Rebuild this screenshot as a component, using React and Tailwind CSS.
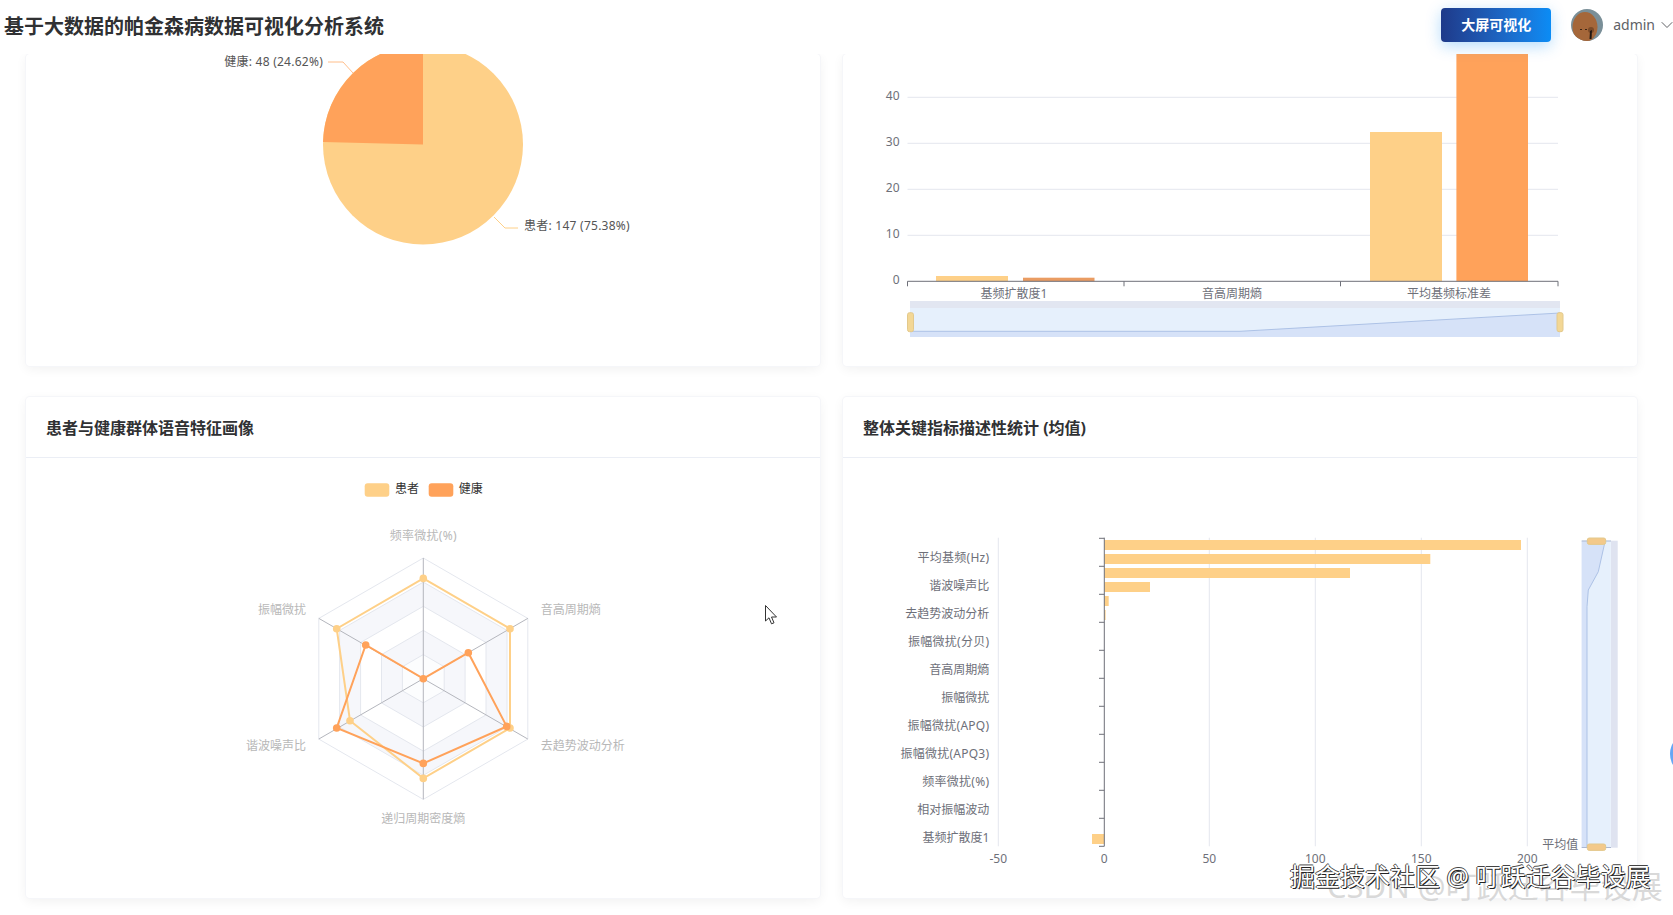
import { ChevronDown } from 'lucide-react'

const light = '#fed088'
const orange = '#ffa25a'
const axisText = '#6e7079'

// vertices of a hexagon around the radar center, top first and clockwise
const radarCx = 423.3
const radarCy = 678.7
function hexPoints(r) {
  return [0, 1, 2, 3, 4, 5]
    .map((i) => {
      const a = (Math.PI / 3) * i
      return `${(radarCx + r * Math.sin(a)).toFixed(1)},${(radarCy - r * Math.cos(a)).toFixed(1)}`
    })
    .join(' ')
}

const patientPts = [[423.3, 578.4], [510, 628.7], [510, 728], [423.3, 778.4], [350, 720.7], [336.7, 628.7]]
const healthyPts = [[423.3, 678.7], [468.3, 652.7], [506.7, 726.4], [423.3, 763.4], [336.7, 728], [365.7, 645]]

const barLabels = [
  ['平均基频(Hz)', 557.5, 0.25],
  ['谐波噪声比', 585.5, 0],
  ['去趋势波动分析', 613.5, 0],
  ['振幅微扰(分贝)', 641.5, 0.25],
  ['音高周期熵', 669.5, 0],
  ['振幅微扰', 697.5, 0],
  ['振幅微扰(APQ)', 725.5, 0.25],
  ['振幅微扰(APQ3)', 753.5, 0.25],
  ['频率微扰(%)', 781.5, 0.25],
  ['相对振幅波动', 809.5, 0],
  ['基频扩散度1', 837.5, 0],
]

const hBars = [
  [545, 1521],
  [559, 1430.3],
  [573, 1350],
  [587, 1150],
  [601, 1108.7],
  [615, 1105.6],
]

function PieChart() {
  return (
    <svg className="block w-full h-full" viewBox="26 54 794 312">
      <circle cx="423" cy="144.5" r="100" fill={light} />
      <path d="M423 144.5 L323 142 A100 100 0 0 1 423 44.5 Z" fill={orange} />
      <polyline points="328,62 343,62 353,73" fill="none" stroke={orange} strokeOpacity="0.7" />
      <polyline points="494,217 505,228 518,228" fill="none" stroke={light} />
      <text x="323" y="61.5" fontSize="12" letterSpacing="0.25" fill="#555" textAnchor="end" dominantBaseline="central">健康: 48 (24.62%)</text>
      <text x="524" y="225" fontSize="12" letterSpacing="0.25" fill="#555" dominantBaseline="central">患者: 147 (75.38%)</text>
    </svg>
  )
}

function GroupedBars() {
  return (
    <svg className="block w-full h-full" viewBox="843 54 794 312">
      {[[97.3, '40'], [143.3, '30'], [189.3, '20'], [235.3, '10']].map(([y, label]) => (
        <g key={label}>
          <line x1="907.5" x2="1558" y1={y} y2={y} stroke="#e4e7ee" />
          <text x="899.5" y={y - 1.5} fontSize="12" fill={axisText} textAnchor="end" dominantBaseline="central">{label}</text>
        </g>
      ))}
      <text x="899.5" y="279.8" fontSize="12" fill={axisText} textAnchor="end" dominantBaseline="central">0</text>

      <rect x="936" y="276" width="72" height="5.3" fill={light} />
      <rect x="1023" y="277.7" width="71.5" height="3.6" fill="#ea9c62" />
      <rect x="1370" y="132" width="72" height="149.3" fill={light} />
      <rect x="1456.4" y="40" width="71.6" height="241.3" fill={orange} />

      <line x1="907.5" x2="1558" y1="281.3" y2="281.3" stroke={axisText} />
      {[907.5, 1124, 1340.5, 1558].map((x) => (
        <line key={x} x1={x} x2={x} y1="281.3" y2="286.3" stroke={axisText} />
      ))}
      <text x="1014" y="293.5" fontSize="12" fill={axisText} textAnchor="middle" dominantBaseline="central">基频扩散度1</text>
      <text x="1232" y="293.5" fontSize="12" fill={axisText} textAnchor="middle" dominantBaseline="central">音高周期熵</text>
      <text x="1449" y="293.5" fontSize="12" fill={axisText} textAnchor="middle" dominantBaseline="central">平均基频标准差</text>

      {/* data zoom */}
      <rect x="910" y="301" width="650" height="7" fill="#dfe3f0" fillOpacity="0.9" />
      <rect x="910" y="308" width="650" height="29" fill="#e6f0fc" />
      <path d="M910 331.3 L1240 331.3 L1560 313 L1560 337 L910 337 Z" fill="#d6e2f8" />
      <path d="M910 331.3 L1240 331.3 L1560 313" fill="none" stroke="#adc2e6" />
      <rect x="907.5" y="312.7" width="6" height="19" rx="2" fill="#f3d795" stroke="#e3c98c" />
      <rect x="1557" y="312.7" width="6" height="19" rx="2" fill="#f3d795" stroke="#e3c98c" />
    </svg>
  )
}

function RadarChart() {
  return (
    <svg className="block w-full h-full" viewBox="26 458 794 440">
      <rect x="364.7" y="483.3" width="24.6" height="13.4" rx="3" fill={light} />
      <text x="395" y="488.7" fontSize="12" fill="#333" dominantBaseline="central">患者</text>
      <rect x="428.7" y="483.3" width="24.6" height="13.4" rx="3" fill={orange} />
      <text x="458.7" y="488.7" fontSize="12" fill="#333" dominantBaseline="central">健康</text>

      {/* rings, outermost first */}
      <polygon points={hexPoints(120.7)} fill="#ffffff" stroke="#e4e7ee" />
      <polygon points={hexPoints(96.6)} fill="#f6f7fb" stroke="#e4e7ee" />
      <polygon points={hexPoints(72.4)} fill="#ffffff" stroke="#e4e7ee" />
      <polygon points={hexPoints(48.3)} fill="#f6f7fb" stroke="#e4e7ee" />
      <polygon points={hexPoints(24.1)} fill="#fcfdfe" stroke="#e4e7ee" />
      {[0, 1, 2, 3, 4, 5].map((i) => {
        const a = (Math.PI / 3) * i
        return (
          <line
            key={i}
            x1={radarCx}
            y1={radarCy}
            x2={radarCx + 120.7 * Math.sin(a)}
            y2={radarCy - 120.7 * Math.cos(a)}
            stroke="#b4b6bd"
          />
        )
      })}

      <polygon points={patientPts.map((p) => p.join(',')).join(' ')} fill="none" stroke={light} strokeWidth="2" />
      {patientPts.map(([x, y]) => (
        <circle key={`${x}-${y}`} cx={x} cy={y} r="3.8" fill={light} />
      ))}
      <polygon points={healthyPts.map((p) => p.join(',')).join(' ')} fill="none" stroke={orange} strokeWidth="2" />
      {healthyPts.map(([x, y]) => (
        <circle key={`${x}-${y}`} cx={x} cy={y} r="3.8" fill={orange} />
      ))}

      <g fontSize="12" fill="#b8b8b8" dominantBaseline="central">
        <text x="423.3" y="535.7" letterSpacing="0.25" textAnchor="middle">频率微扰(%)</text>
        <text x="540.7" y="609.7">音高周期熵</text>
        <text x="540.7" y="745">去趋势波动分析</text>
        <text x="423.3" y="818" textAnchor="middle">递归周期密度熵</text>
        <text x="306" y="745" textAnchor="end">谐波噪声比</text>
        <text x="306" y="609.7" textAnchor="end">振幅微扰</text>
      </g>
    </svg>
  )
}

function HorizontalBars() {
  const ticks = []
  for (let i = 0; i < 12; i++) ticks.push(538.3 + i * 28)
  return (
    <svg className="block w-full h-full" viewBox="843 458 794 440">
      {[998.3, 1209.3, 1315.3, 1421.3, 1527.3].map((x) => (
        <line key={x} x1={x} x2={x} y1="537.7" y2="846.3" stroke="#e4e7ee" />
      ))}
      {hBars.map(([y, end]) => (
        <rect key={y} x="1104.3" y={y - 5} width={end - 1104.3} height="10" fill={light} />
      ))}
      <rect x="1092" y="834" width="12.3" height="10" fill={light} />

      <line x1="1104.3" x2="1104.3" y1="537.7" y2="846.3" stroke={axisText} />
      {ticks.map((y) => (
        <line key={y} x1="1099" x2="1104.3" y1={y} y2={y} stroke={axisText} />
      ))}
      {barLabels.map(([label, y, spacing]) => (
        <text key={label} x="989.3" y={y} fontSize="12" letterSpacing={spacing} fill={axisText} textAnchor="end" dominantBaseline="central">{label}</text>
      ))}
      {[[998.3, '-50'], [1104.3, '0'], [1209.3, '50'], [1315.3, '100'], [1421.3, '150'], [1527.3, '200']].map(([x, label]) => (
        <text key={label} x={x} y="858.7" fontSize="12" fill={axisText} textAnchor="middle" dominantBaseline="central">{label}</text>
      ))}

      {/* data zoom */}
      <text x="1578.3" y="844.5" fontSize="12" fill={axisText} textAnchor="end" dominantBaseline="central">平均值</text>
      <rect x="1610.7" y="540.7" width="7" height="307" fill="#dfe3f0" />
      <rect x="1581.7" y="540.7" width="29" height="307" fill="#e6f0fc" />
      <path d="M1605 541.7 L1598.3 571.7 L1588.3 590 L1587 606.7 L1587 847.7 L1581.7 847.7 L1581.7 540.7 L1605 540.7 Z" fill="#d6e2f8" />
      <path d="M1605 541.7 L1598.3 571.7 L1588.3 590 L1587 606.7 L1587 847.7" fill="none" stroke="#adc2e6" />
      <line x1="1581.7" x2="1611" y1="541" y2="541" stroke="#acb8d1" />
      <line x1="1581.7" x2="1611" y1="847.5" y2="847.5" stroke="#acb8d1" />
      <rect x="1587.3" y="538" width="18.4" height="6.4" rx="2" fill="#f3c98a" stroke="#e3c98c" />
      <rect x="1587.3" y="844" width="18.4" height="6.4" rx="2" fill="#f3c98a" stroke="#e3c98c" />
    </svg>
  )
}

function Avatar() {
  return (
    <svg className="w-8 h-8 rounded-full" viewBox="0 0 32 32">
      <rect width="32" height="32" fill="#7a8f98" />
      <ellipse cx="14" cy="18" rx="12.5" ry="15" fill="#a5673a" />
      <circle cx="20" cy="21" r="3" fill="#7a4a28" />
      <path d="M19 22 L21 21 L20.5 30 L18.5 30 Z" fill="#1f1612" />
      <rect x="9" y="20" width="2" height="1" fill="#3a2415" />
      <rect x="14" y="20" width="2" height="1" fill="#3a2415" />
    </svg>
  )
}

function Card({ title, children }) {
  return (
    <div className="flex flex-col bg-white rounded shadow-[0_0_0_1px_#f5f6f9,0_3px_12px_rgba(0,0,0,0.06)] overflow-hidden">
      {title && (
        <div className="h-[61px] flex-none flex items-center px-5 pt-0.5 border-b border-[#ebeef5] text-base font-bold text-[#303133]">
          {title}
        </div>
      )}
      <div className="flex-1 min-h-0">{children}</div>
    </div>
  )
}

export default function App() {
  return (
    <div className="relative h-screen overflow-hidden bg-white font-['Noto_Sans','Noto_Sans_CJK_SC',sans-serif]">
      <header className="relative z-10 h-[54px] flex items-center justify-between pl-1 bg-white">
        <h1 className="text-xl font-bold text-[#303133] whitespace-nowrap">基于大数据的帕金森病数据可视化分析系统</h1>
        <div className="flex items-center pb-1 -mr-1">
          <button className="w-[110px] h-[34px] rounded text-sm font-bold text-white bg-gradient-to-r from-[#1e3a8a] to-[#0a8cf5] shadow-[0_4px_15px_rgba(10,140,245,0.3)]">
            大屏可视化
          </button>
          <div className="ml-5 flex items-center">
            <Avatar />
            <span className="ml-2.5 text-sm text-[#606266]">admin</span>
            <ChevronDown className="ml-0.5 w-5 h-5 text-[#606266]" strokeWidth={1.2} />
          </div>
        </div>
      </header>

      <main className="grid grid-cols-[794px_794px] grid-rows-[312px_501px] gap-x-[23px] gap-y-[31px] pl-[26px]">
        <Card><PieChart /></Card>
        <Card><GroupedBars /></Card>
        <Card title="患者与健康群体语音特征画像"><RadarChart /></Card>
        <Card title="整体关键指标描述性统计 (均值)"><HorizontalBars /></Card>
      </main>

      {/* mouse pointer caught in the screen recording */}
      <svg className="absolute left-[765px] top-[605px] z-20 w-3 h-5" viewBox="0 0 12 20">
        <path d="M0.5 0.5 L0.5 16 L4 12.8 L6.5 18.8 L9 17.8 L6.5 12 L11.5 12 Z" fill="#fff" stroke="#333" strokeWidth="1" strokeLinejoin="round" />
      </svg>

      {/* back-to-top button peeking in at the edge */}
      <div className="absolute left-[1670px] top-[732px] z-10 w-11 h-11 rounded-full bg-[#66a6f5]" />

      {/* watermarks */}
      <div className="absolute left-[1327px] top-[871px] z-20 text-[31px] leading-none text-[#c9c9c9]/70 whitespace-nowrap">CSDN @叮跃迁谷毕设展</div>
      <div className="absolute left-[1290px] top-[864px] z-20 text-[25px] leading-none text-white whitespace-nowrap [text-shadow:1px_1px_0_#222,-1px_0_0_#444,0_-1px_0_#444]">掘金技术社区 @ 叮跃迁谷毕设展</div>
    </div>
  )
}
